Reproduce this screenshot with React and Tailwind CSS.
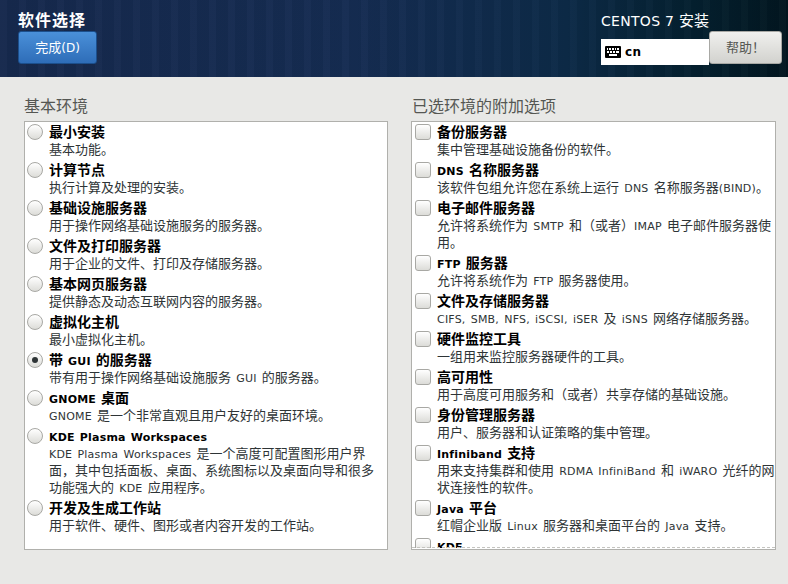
const baseItems = [
  { title: '最小安装', desc: ['基本功能。'] },
  { title: '计算节点', desc: ['执行计算及处理的安装。'] },
  { title: '基础设施服务器', desc: ['用于操作网络基础设施服务的服务器。'] },
  { title: '文件及打印服务器', desc: ['用于企业的文件、打印及存储服务器。'] },
  { title: '基本网页服务器', desc: ['提供静态及动态互联网内容的服务器。'] },
  { title: '虚拟化主机', desc: ['最小虚拟化主机。'] },
  { title: '带 GUI 的服务器', desc: ['带有用于操作网络基础设施服务 GUI 的服务器。'], checked: true },
  { title: 'GNOME 桌面', desc: ['GNOME 是一个非常直观且用户友好的桌面环境。'] },
  {
    title: 'KDE Plasma Workspaces',
    desc: [
      'KDE Plasma Workspaces 是一个高度可配置图形用户界',
      '面，其中包括面板、桌面、系统图标以及桌面向导和很多',
      '功能强大的 KDE 应用程序。',
    ],
  },
  { title: '开发及生成工作站', desc: ['用于软件、硬件、图形或者内容开发的工作站。'] },
];

const addons = [
  { title: '备份服务器', desc: ['集中管理基础设施备份的软件。'] },
  { title: 'DNS 名称服务器', desc: ['该软件包组允许您在系统上运行 DNS 名称服务器(BIND)。'] },
  { title: '电子邮件服务器', desc: ['允许将系统作为 SMTP 和（或者）IMAP 电子邮件服务器使', '用。'] },
  { title: 'FTP 服务器', desc: ['允许将系统作为 FTP 服务器使用。'] },
  { title: '文件及存储服务器', desc: ['CIFS, SMB, NFS, iSCSI, iSER 及 iSNS 网络存储服务器。'] },
  { title: '硬件监控工具', desc: ['一组用来监控服务器硬件的工具。'] },
  { title: '高可用性', desc: ['用于高度可用服务和（或者）共享存储的基础设施。'] },
  { title: '身份管理服务器', desc: ['用户、服务器和认证策略的集中管理。'] },
  { title: 'Infiniband 支持', desc: ['用来支持集群和使用 RDMA InfiniBand 和 iWARO 光纤的网', '状连接性的软件。'] },
  { title: 'Java 平台', desc: ['红帽企业版 Linux 服务器和桌面平台的 Java 支持。'] },
  { title: 'KDE', desc: [] },
];

// latin runs are set smaller than the cjk ones, same as the gtk font fallback
function Mixed({ text, latin, cjk }) {
  const parts = text.split(/([\u0000-\u00ff]+)/).filter(Boolean);
  return parts.map((part, i) => (
    <span key={i} className={/^[\u0000-\u00ff]/.test(part) ? latin : cjk}>
      {part}
    </span>
  ));
}

function Radio({ checked }) {
  return (
    <div className="w-4 h-4 shrink-0 rounded-full border border-[#a8a8a4] bg-gradient-to-b from-white to-[#dcdcd8] flex items-center justify-center">
      {checked && <div className="w-[6px] h-[6px] rounded-full bg-[#2e3436]" />}
    </div>
  );
}

function Checkbox() {
  return (
    <div className="w-4 h-4 shrink-0 rounded-[3px] border border-[#a8a8a4] bg-gradient-to-b from-white to-[#dcdcd8]" />
  );
}

function Row({ item, control }) {
  return (
    <div className="flex gap-[6px] pb-[5px] pl-[2px]">
      {control}
      <div className="-mt-[1px] text-[#2e3436] whitespace-nowrap">
        <div className="h-[17px] leading-[17px] font-bold text-black">
          <Mixed text={item.title} latin="text-[11px] tracking-[0.2px] [word-spacing:1px]" cjk="text-[14px]" />
        </div>
        {item.desc.map((line) => (
          <div key={line} className="h-[17px] leading-[17px]">
            <Mixed text={line} latin="text-[11px] tracking-[0.2px] [word-spacing:1.5px]" cjk="text-[13px]" />
          </div>
        ))}
      </div>
    </div>
  );
}

function KeyboardIcon() {
  return (
    <svg width="16" height="12" viewBox="0 0 16 12">
      <rect x="0" y="0" width="16" height="12" rx="1" fill="#000" />
      <g fill="#fff">
        <rect x="2" y="2" width="1" height="2" />
        <rect x="4" y="2" width="2" height="2" />
        <rect x="7" y="2" width="2" height="2" />
        <rect x="10" y="2" width="1" height="2" />
        <rect x="12" y="2" width="2" height="2" />
        <rect x="2" y="5" width="2" height="2" />
        <rect x="5" y="5" width="2" height="2" />
        <rect x="8" y="5" width="2" height="2" />
        <rect x="11" y="5" width="3" height="2" />
        <rect x="4" y="8" width="8" height="2" />
      </g>
    </svg>
  );
}

export default function App() {
  return (
    <div
      className="w-[788px] h-[584px] overflow-hidden bg-[#e8e8e6] flex flex-col"
      style={{ fontFamily: '"DejaVu Sans", "Noto Sans CJK SC", sans-serif' }}
    >
      {/* Header */}
      <div className="h-[77px] shrink-0 flex justify-between pl-[18px] pr-[6px] bg-[repeating-linear-gradient(90deg,rgba(255,255,255,0.015)_0px,rgba(255,255,255,0.015)_7px,rgba(0,0,0,0.03)_7px,rgba(0,0,0,0.03)_19px),linear-gradient(90deg,#16294d_0%,#152c52_45%,#0c2a47_72%,#04202f_88%,#021620_100%)]">
        <div>
          <div className="mt-[11px] h-5 leading-5 text-[16px] font-bold text-white tracking-[1px]">软件选择</div>
          <button className="w-[79px] h-[33px] rounded-[3px] border border-[#1c4f8c] bg-gradient-to-b from-[#4a90d9] to-[#2e6db8] text-white pb-[1px]">
            <Mixed text="完成(D)" latin="text-[12px]" cjk="text-[13px]" />
          </button>
        </div>
        <div className="w-[181px]">
          <div className="mt-[12px] h-[17px] leading-[17px] text-white whitespace-nowrap">
            <Mixed text="CENTOS 7 安装" latin="text-[14px] tracking-[0.3px]" cjk="text-[15px]" />
          </div>
          <div className="flex mt-[2px]">
            <div className="w-[108px] h-[26px] mt-[8px] bg-white flex items-center gap-[4px] pl-[4px] text-[12px] font-bold text-black tracking-[0.5px]">
              <KeyboardIcon />
              cn
            </div>
            <button className="w-[73px] h-[33px] rounded-[3px] border border-[#a8a8a4] bg-gradient-to-b from-[#f0f0ee] to-[#d2d2ce] text-[#555753] text-[13px]">
              帮助！
            </button>
          </div>
        </div>
      </div>

      {/* Body */}
      <div className="flex gap-[23px] pl-6 pr-3 pt-[20px]">
        <div className="w-[364px]">
          <div className="h-[24px] leading-[20px] text-[16px] text-[#555753]">基本环境</div>
          <div className="h-[429px] border border-[#b0b0ac] bg-white pt-[2px] overflow-hidden">
            {baseItems.map((item) => (
              <Row key={item.title} item={item} control={<Radio checked={item.checked} />} />
            ))}
          </div>
        </div>
        <div className="w-[365px]">
          <div className="h-[24px] leading-[20px] text-[16px] text-[#555753] pl-[1px]">已选环境的附加选项</div>
          <div className="relative h-[429px] border border-[#b0b0ac] bg-white pt-[2px] pl-[1px] overflow-hidden">
            {addons.map((item) => (
              <Row key={item.title} item={item} control={<Checkbox />} />
            ))}
            <div className="absolute left-0 right-0 bottom-[1px] border-t border-dashed border-[#c4c4c0]" />
            <div className="absolute left-0 right-0 bottom-0 h-[1px] bg-white" />
          </div>
        </div>
      </div>
    </div>
  );
}
